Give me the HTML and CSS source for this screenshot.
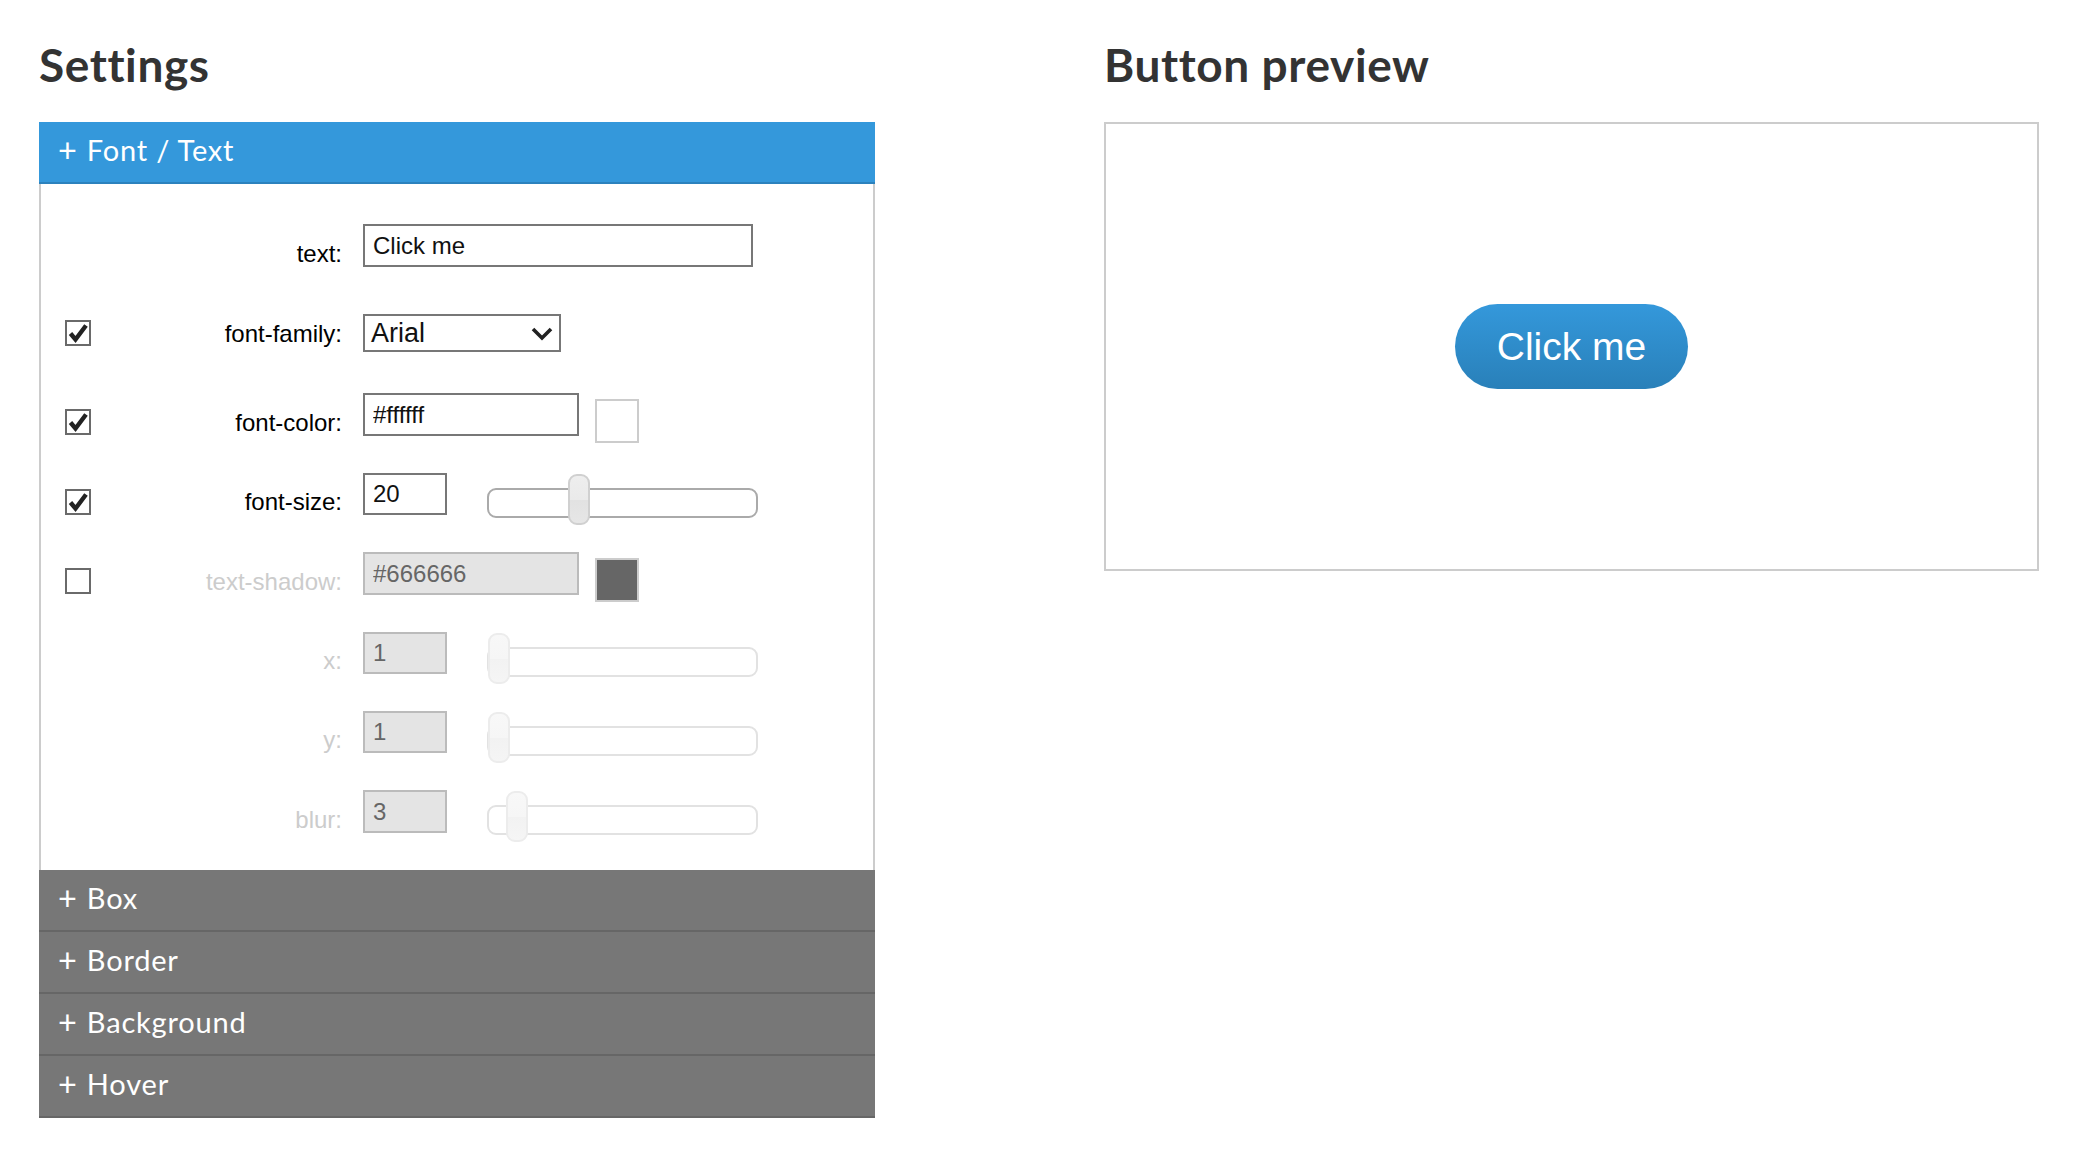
FILE: index.html
```html
<!DOCTYPE html>
<html lang="en">
<head>
<meta charset="utf-8">
<title>Button generator</title>
<link rel="stylesheet" href="styles.css">
</head>
<body>
<div class="page">
  <section class="col col-settings">
    <h1 class="title">Settings</h1>
    <div class="accordion">
      <div class="acc-head acc-head--active"><span class="plus">+</span> Font / Text</div>
      <div class="acc-body">
        <div class="row row--first">
          <span class="cb-slot"></span>
          <label class="lbl">text:</label>
          <input class="inp inp--text" type="text" value="Click me">
        </div>
        <div class="row row--select">
          <span class="cb cb--on"><svg viewBox="0 0 22 22" width="22" height="22"><polyline points="3.5,11.5 8.5,17.5 19,3.5" fill="none" stroke="#222" stroke-width="4.4" stroke-linejoin="miter"/></svg></span>
          <label class="lbl">font-family:</label>
          <div class="select"><span>Arial</span><svg viewBox="0 0 22 15" width="22" height="15"><polyline points="2,3 11,12 20,3" fill="none" stroke="#222" stroke-width="3.6"/></svg></div>
        </div>
        <div class="row">
          <span class="cb cb--on"><svg viewBox="0 0 22 22" width="22" height="22"><polyline points="3.5,11.5 8.5,17.5 19,3.5" fill="none" stroke="#222" stroke-width="4.4" stroke-linejoin="miter"/></svg></span>
          <label class="lbl">font-color:</label>
          <input class="inp inp--color" type="text" value="#ffffff">
          <span class="swatch swatch--white"></span>
        </div>
        <div class="row">
          <span class="cb cb--on"><svg viewBox="0 0 22 22" width="22" height="22"><polyline points="3.5,11.5 8.5,17.5 19,3.5" fill="none" stroke="#222" stroke-width="4.4" stroke-linejoin="miter"/></svg></span>
          <label class="lbl">font-size:</label>
          <input class="inp inp--num" type="text" value="20">
          <div class="slider"><span class="thumb" style="left:79px"></span></div>
        </div>
        <div class="row row--off">
          <span class="cb"></span>
          <label class="lbl">text-shadow:</label>
          <input class="inp inp--color" type="text" value="#666666" disabled>
          <span class="swatch swatch--dark"></span>
        </div>
        <div class="row row--off">
          <span class="cb-slot"></span>
          <label class="lbl">x:</label>
          <input class="inp inp--num" type="text" value="1" disabled>
          <div class="slider"><span class="thumb" style="left:-1px"></span></div>
        </div>
        <div class="row row--off">
          <span class="cb-slot"></span>
          <label class="lbl">y:</label>
          <input class="inp inp--num" type="text" value="1" disabled>
          <div class="slider"><span class="thumb" style="left:-1px"></span></div>
        </div>
        <div class="row row--off">
          <span class="cb-slot"></span>
          <label class="lbl">blur:</label>
          <input class="inp inp--num" type="text" value="3" disabled>
          <div class="slider"><span class="thumb" style="left:17px"></span></div>
        </div>
      </div>
      <div class="acc-head"><span class="plus">+</span> Box</div>
      <div class="acc-head"><span class="plus">+</span> Border</div>
      <div class="acc-head"><span class="plus">+</span> Background</div>
      <div class="acc-head"><span class="plus">+</span> Hover</div>
    </div>
  </section>
  <section class="col col-preview">
    <h1 class="title">Button preview</h1>
    <div class="preview">
      <button class="demo-btn" type="button">Click me</button>
    </div>
  </section>
</div>
</body>
</html>
```

FILE: styles.css
```css
html, body {
  margin: 0;
  padding: 0;
  background: #fff;
}

body {
  font-family: "Liberation Sans", Arial, sans-serif;
  color: #111;
}

.page {
  display: flex;
  align-items: flex-start;
  padding: 37px 0 0 39px;
}

.col-settings {
  width: 836px;
}

.col-preview {
  width: 935px;
  margin-left: 229px;
}

.title {
  margin: 0 0 29px 0;
  font-family: Lato, "Open Sans", sans-serif;
  font-weight: 700;
  font-size: 46px;
  line-height: 56px;
  letter-spacing: 0.6px;
  color: #333;
}

/* accordion */
.acc-head {
  height: 62px;
  box-sizing: border-box;
  padding: 11px 20px 0 20px;
  font-family: Lato, "Open Sans", sans-serif;
  font-size: 29px;
  line-height: 34px;
  letter-spacing: 0.8px;
  color: #fff;
  background: #777;
  border-bottom: 2px solid #666;
}

.plus {
  display: inline-block;
  margin-right: 2px;
  transform: scale(1.12);
}

.acc-head--active {
  background: #3498db;
  border-bottom-color: #2c82bd;
}

.acc-body {
  border-left: 2px solid #ccc;
  border-right: 2px solid #ccc;
  padding: 40px 0 0 24px;
}

.row {
  display: flex;
  align-items: flex-start;
  height: 79.4px;
}

.row--first {
  height: 90px;
}

.cb-slot {
  width: 26px;
  flex: none;
}

.cb {
  width: 26px;
  height: 26px;
  box-sizing: border-box;
  border: 2px solid #6a6a6a;
  background: #fff;
  flex: none;
  margin-top: 16px;
  display: flex;
  align-items: center;
  justify-content: center;
}

.cb svg {
  display: block;
}

.lbl {
  width: 251px;
  flex: none;
  text-align: right;
  font-family: "Liberation Sans", Arial, sans-serif;
  font-size: 24px;
  line-height: normal;
  color: #000;
  margin: 15.5px 21px 0 0;
}

.row--select .cb {
  margin-top: 6px;
}

.row--select .lbl {
  margin-top: 5.5px;
}

.inp {
  box-sizing: border-box;
  height: 43px;
  border: 2px solid #777;
  border-radius: 0;
  padding: 0 8px;
  margin: 0;
  font-family: "Liberation Sans", Arial, sans-serif;
  font-size: 24px;
  color: #111;
  background: #fff;
  outline: none;
  flex: none;
}

.inp--text {
  width: 390px;
}

.inp--color {
  width: 216px;
}

.inp--num {
  width: 84px;
  height: 42.5px;
}

.inp:disabled {
  background: #e4e4e4;
  border-color: #bbb;
  color: #666;
}

.select {
  width: 198px;
  height: 38px;
  box-sizing: border-box;
  border: 2px solid #777;
  padding: 0 6px 0 6px;
  display: flex;
  align-items: center;
  justify-content: space-between;
  font-family: "Liberation Sans", Arial, sans-serif;
  font-size: 27px;
  color: #111;
  flex: none;
}

.select svg {
  display: block;
}

.swatch {
  width: 44px;
  height: 44px;
  box-sizing: border-box;
  border: 2px solid #ccc;
  margin: 6px 0 0 16px;
  flex: none;
}

.swatch--white {
  background: #fff;
}

.swatch--dark {
  background: #666;
}

.slider {
  position: relative;
  width: 271px;
  height: 30px;
  box-sizing: border-box;
  border: 2px solid #aaa;
  border-radius: 9px;
  background: #fff;
  margin: 15px 0 0 40px;
  flex: none;
}

.thumb {
  position: absolute;
  top: -16px;
  width: 22px;
  height: 51px;
  box-sizing: border-box;
  border: 2px solid #d0d0d0;
  border-radius: 9px;
  background: linear-gradient(#eeeeee 0%, #eaeaea 50%, #e2e2e2 51%, #e6e6e6 100%);
}

.row--off .lbl {
  color: #ccc;
}

.row--off .slider {
  border-color: #e2e2e2;
}

.row--off .thumb {
  border-color: #ececec;
  background: linear-gradient(#f8f8f8 0%, #f6f6f6 50%, #f2f2f2 51%, #f5f5f5 100%);
}

/* preview */
.preview {
  height: 449px;
  box-sizing: border-box;
  border: 2px solid #ccc;
  display: flex;
  align-items: center;
  justify-content: center;
}

.demo-btn {
  height: 85px;
  padding: 0 41.5px;
  border: none;
  border-radius: 43px;
  background: linear-gradient(#3498db, #2980b9);
  color: #fff;
  font-family: "Liberation Sans", Arial, sans-serif;
  font-size: 39px;
  line-height: normal;
  cursor: pointer;
}
```
